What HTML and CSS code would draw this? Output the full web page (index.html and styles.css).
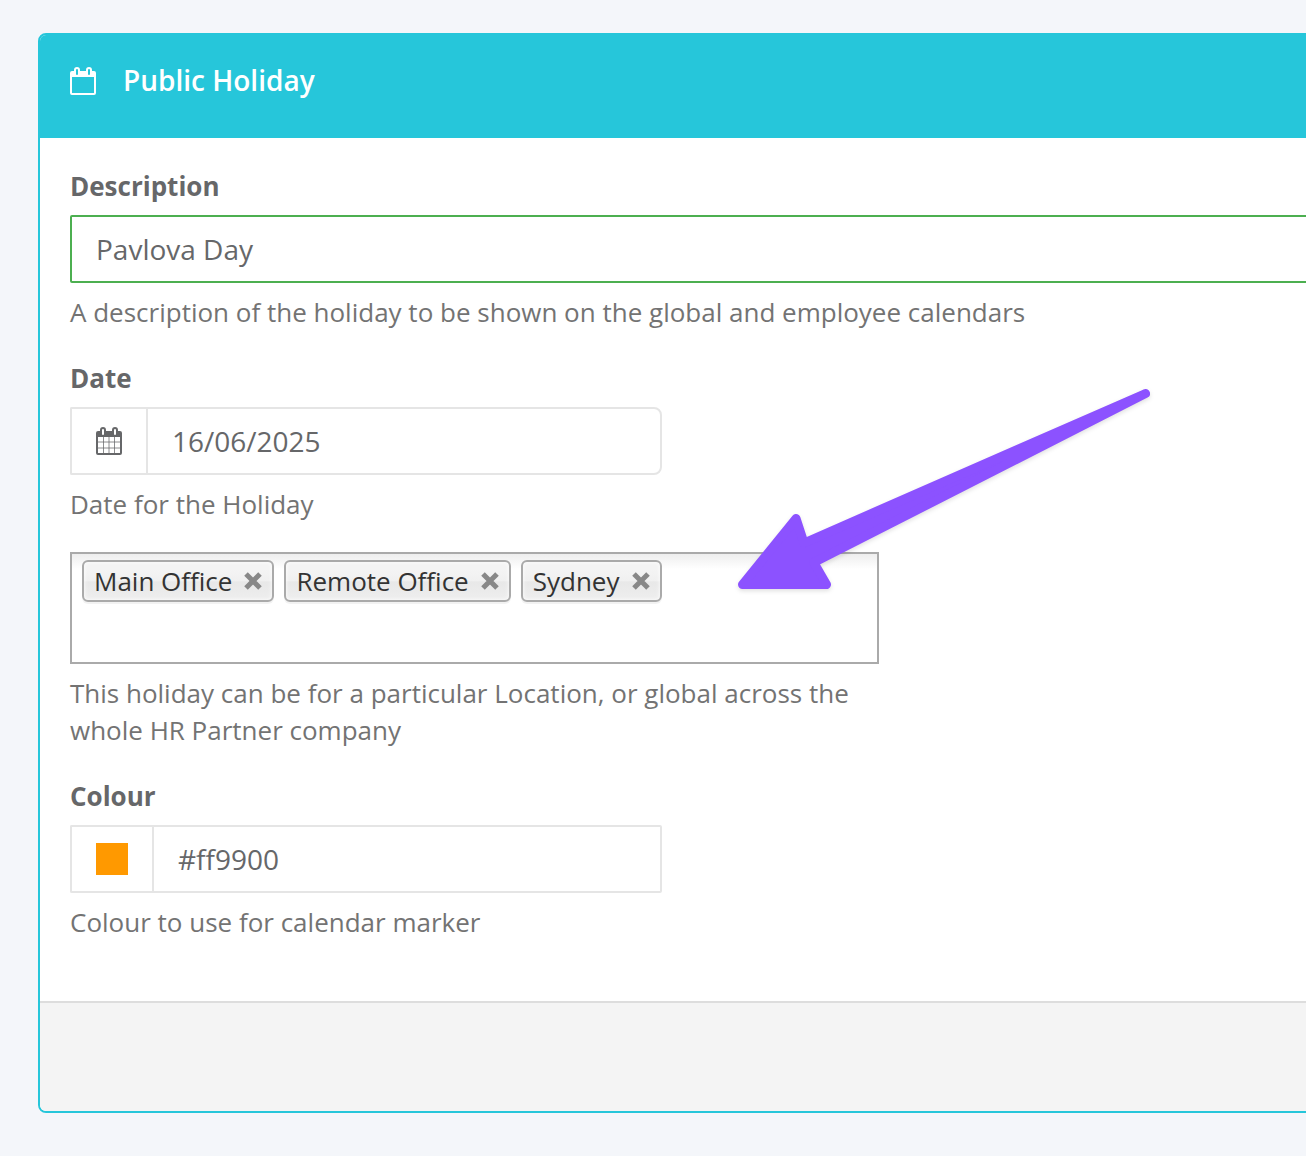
FILE: index.html
```html
<!DOCTYPE html>
<html lang="en">
<head>
  <meta charset="utf-8">
  <meta name="viewport" content="width=device-width, initial-scale=1">
  <title>Public Holiday</title>
  <link rel="stylesheet" href="styles.css">
</head>
<body>
  <main class="page">
    <form class="card">
      <header class="card-header">
        <svg class="icon" viewBox="0 0 26 30" aria-hidden="true">
          <path fill="currentColor" fill-rule="evenodd" d="M2 5H4V4a3 3 0 0 1 6 0V5H16V4a3 3 0 0 1 6 0V5H24a2 2 0 0 1 2 2V27a2 2 0 0 1-2 2H2a2 2 0 0 1-2-2V7a2 2 0 0 1 2-2ZM2 11V27H24V11ZM7 3a1 1 0 0 0-1 1V8a1 1 0 0 0 2 0V4a1 1 0 0 0-1-1ZM19 3a1 1 0 0 0-1 1V8a1 1 0 0 0 2 0V4a1 1 0 0 0-1-1Z"/>
        </svg>
        <h1 class="card-title">Public Holiday</h1>
      </header>

      <div class="card-body">
        <div class="field">
          <label class="label" for="description">Description</label>
          <input class="input input-valid" id="description" type="text" value="Pavlova Day">
          <p class="help">A description of the holiday to be shown on the global and employee calendars</p>
        </div>

        <div class="field">
          <label class="label" for="date">Date</label>
          <div class="input-group input-group-rounded">
            <span class="addon">
              <svg class="icon" viewBox="0 0 26 30" aria-hidden="true">
                <path fill="currentColor" fill-rule="evenodd" d="M2 5H4V4a3 3 0 0 1 6 0V5H16V4a3 3 0 0 1 6 0V5H24a2 2 0 0 1 2 2V27a2 2 0 0 1-2 2H2a2 2 0 0 1-2-2V7a2 2 0 0 1 2-2ZM2 11V27H24V11ZM7 3a1 1 0 0 0-1 1V8a1 1 0 0 0 2 0V4a1 1 0 0 0-1-1ZM19 3a1 1 0 0 0-1 1V8a1 1 0 0 0 2 0V4a1 1 0 0 0-1-1Z"/>
                <path fill="none" stroke="currentColor" stroke-opacity=".75" d="M7.500 11V27M13 11V27M18.500 11V27M2 16H24M2 22H24"/>
              </svg>
            </span>
            <input class="input" id="date" type="text" value="16/06/2025">
          </div>
          <p class="help">Date for the Holiday</p>
        </div>

        <div class="field field-wide">
          <ul class="chips" aria-label="Locations">
            <li class="chip">Main Office
              <button class="chip-close" type="button" aria-label="Remove Main Office"><svg viewBox="0 0 18 18"><path d="M2 2L16 16M16 2L2 16"/></svg></button></li>
            <li class="chip">Remote Office
              <button class="chip-close" type="button" aria-label="Remove Remote Office"><svg viewBox="0 0 18 18"><path d="M2 2L16 16M16 2L2 16"/></svg></button></li>
            <li class="chip">Sydney
              <button class="chip-close" type="button" aria-label="Remove Sydney"><svg viewBox="0 0 18 18"><path d="M2 2L16 16M16 2L2 16"/></svg></button></li>
          </ul>
          <p class="help">This holiday can be for a particular Location, or global across the whole HR Partner company</p>
          <svg class="arrow" viewBox="730 380 430 220" aria-hidden="true">
            <path d="M742.500 584.500L796 518.500L804 543L1145.500 393.500L813.800 562.600L826.500 584.500Z"/>
          </svg>
        </div>

        <div class="field">
          <label class="label" for="colour">Colour</label>
          <div class="input-group">
            <span class="addon"><span class="swatch"></span></span>
            <input class="input" id="colour" type="text" value="#ff9900">
          </div>
          <p class="help">Colour to use for calendar marker</p>
        </div>
      </div>

      <footer class="card-footer"></footer>
    </form>
  </main>
</body>
</html>
```

FILE: styles.css
```css
* {
  box-sizing: border-box;
}

body {
  margin: 0;
  overflow-x: hidden;
  background: #f4f6fa;
  color: #666769;
  font: 26px/37px "Open Sans", "Noto Sans", sans-serif;
}

.page {
  padding: 33px 0 43px 38px;
}

/* The card runs on past the right edge of the window */
.card {
  margin-right: -40px;
  border: 2px solid #26c6da;
  border-radius: 8px;
  background: #fff;
  overflow: hidden;
}

.card-header {
  display: flex;
  align-items: flex-start;
  gap: 27px;
  padding: 27px 30px 39px;
  background: #26c6da;
  color: #fff;
}

.card-title {
  margin: 0;
  font-size: 28px;
  font-weight: 600;
  line-height: 37px;
}

.icon {
  display: block;
  flex: none;
  width: 26px;
  height: 30px;
}

.card-header .icon {
  margin-top: 4px;
}

.card-body {
  display: flex;
  flex-direction: column;
  gap: 29px;
  padding: 30px 30px 60px;
}

.field {
  position: relative;
}

.field-wide {
  max-width: 809px;
}

.label {
  display: block;
  margin-bottom: 10px;
  font-weight: 700;
}

.help {
  margin: 11px 0 0;
  color: #737373;
}

.input {
  display: block;
  width: 100%;
  height: 68px;
  padding: 0 24px;
  border: 2px solid #e5e5e5;
  border-radius: 2px;
  background: #fff;
  color: #666769;
  font: inherit;
  font-size: 28px;
}

.input-valid {
  border-color: #4caf50;
}

.input-group {
  display: flex;
  max-width: 592px;
}

.input-group .input {
  flex: 1;
  min-width: 0;
  border-radius: 0 2px 2px 0;
}

.input-group-rounded .input {
  border-radius: 0 8px 8px 0;
}

.addon {
  display: flex;
  align-items: center;
  padding: 0 24px;
  border: 2px solid #e5e5e5;
  border-right: 0;
  border-radius: 2px 0 0 2px;
}

.swatch {
  width: 32px;
  height: 32px;
  background: #ff9900;
}

.chips {
  display: flex;
  flex-wrap: wrap;
  align-content: flex-start;
  gap: 10px;
  min-height: 112px;
  margin: 0;
  padding: 6px 10px;
  border: 2px solid #aaa;
  background: linear-gradient(#eee, #fff 15px);
  list-style: none;
}

.chip {
  display: flex;
  align-items: center;
  gap: 12px;
  height: 42px;
  padding: 0 10px;
  border: 2px solid #aaa;
  border-radius: 6px;
  background: linear-gradient(#f4f4f4 20%, #f0f0f0 50%, #e8e8e8 52%, #eee);
  box-shadow: inset 0 0 4px #fff, 0 2px 0 rgba(0, 0, 0, .05);
  color: #333;
}

.chip-close {
  width: 18px;
  height: 18px;
  padding: 0;
  border: 0;
  background: none;
}

.chip-close svg {
  display: block;
  fill: none;
  stroke: #888;
  stroke-width: 5px;
}

.arrow {
  position: absolute;
  top: -172px;
  left: 660px;
  width: 430px;
  height: 220px;
  fill: #8c52ff;
  stroke: #8c52ff;
  stroke-width: 9px;
  stroke-linejoin: round;
  filter: drop-shadow(0 2px 2px rgba(0, 0, 0, .12));
  pointer-events: none;
}

.card-footer {
  height: 110px;
  border-top: 2px solid #ddd;
  background: #f4f4f4;
}
```
